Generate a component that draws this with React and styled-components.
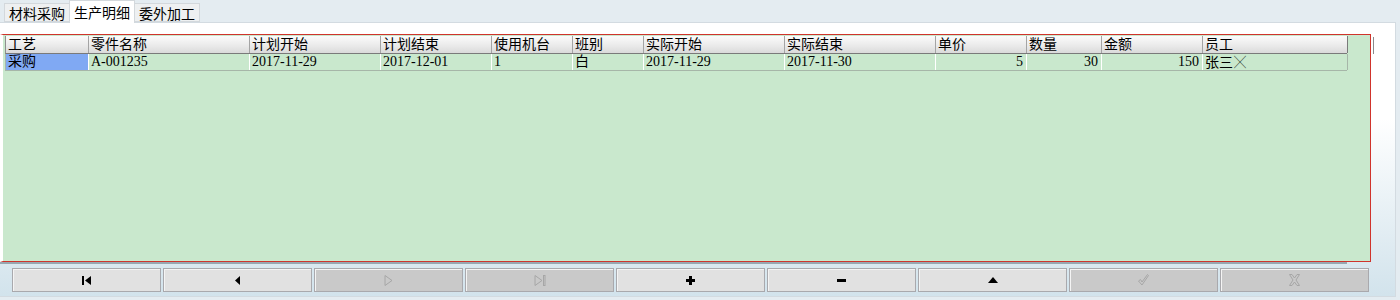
import React from "react";
import styled, { createGlobalStyle } from "styled-components";

const GlobalStyle = createGlobalStyle`
  html, body {
    margin: 0;
    padding: 0;
    background: #e4ecf1;
  }
  body {
    font-family: "Noto Sans CJK SC", sans-serif;
    font-size: 14px;
    color: #000;
  }
`;

const columns = [
  { title: "工艺", width: 83 },
  { title: "零件名称", width: 161 },
  { title: "计划开始", width: 131 },
  { title: "计划结束", width: 111 },
  { title: "使用机台", width: 81 },
  { title: "班别", width: 71 },
  { title: "实际开始", width: 141 },
  { title: "实际结束", width: 151 },
  { title: "单价", width: 91, num: true },
  { title: "数量", width: 75, num: true },
  { title: "金额", width: 101, num: true },
  { title: "员工", width: 145 },
];

const row = [
  "采购",
  "A-001235",
  "2017-11-29",
  "2017-12-01",
  "1",
  "白",
  "2017-11-29",
  "2017-11-30",
  "5",
  "30",
  "150",
  "张三",
];

const template = columns.map((c) => `${c.width}px`).join(" ");

const Page = styled.div`
  width: 1400px;
  height: 300px;
  display: flex;
  flex-direction: column;
  overflow: hidden;
`;

const TabStrip = styled.div`
  height: 22px;
  display: flex;
  align-items: flex-end;
  padding-left: 4px;
  position: relative;
  z-index: 1;
`;

const Tab = styled.div`
  box-sizing: border-box;
  height: ${(p) => (p.$active ? "23px" : "19px")};
  margin-bottom: ${(p) => (p.$active ? "-1px" : "0")};
  padding: 0 4px;
  line-height: ${(p) => (p.$active ? "22px" : "19px")};
  background: ${(p) => (p.$active ? "#ffffff" : "#eef0f1")};
  border: 1px solid #d3d8dc;
  border-bottom: ${(p) => (p.$active ? "none" : "1px solid #d3d8dc")};
  margin-right: -1px;
  white-space: nowrap;
`;

const Panel = styled.div`
  width: 1396px;
  height: 275px;
  box-sizing: border-box;
  border: 1px solid #d3dbe1;
  border-left: none;
  background: linear-gradient(180deg, #ffffff 0%, #ffffff 35%, #d2e3ec 100%);
  padding-top: 11px;
  display: flex;
  flex-direction: column;
`;

const Body = styled.div`
  display: flex;
`;

const GridFrame = styled.div`
  width: 1371px;
  height: 228px;
  box-sizing: border-box;
  border: 1px solid #d0342c;
  border-left: 3px solid #ffffff;
  background: #c9e8cd;
  padding: 1px 0 0 2px;
`;

const Gutter = styled.div`
  flex: 1;
  padding: 3px 0 0 2px;
`;

const Tick = styled.div`
  width: 1px;
  height: 17px;
  background: #8a8a8a;
`;

const GridRow = styled.div`
  display: grid;
  grid-template-columns: ${template};
  width: 1342px;
  height: ${(p) => (p.$header ? "18px" : "17px")};
  box-sizing: border-box;
  border-left: 1px solid ${(p) => (p.$header ? "#8e8e8e" : "#a6b6a8")};
  border-bottom: 1px solid ${(p) => (p.$header ? "#7a7a7a" : "#a6b6a8")};
  background: ${(p) =>
    p.$header ? "linear-gradient(180deg, #fbfbfb 0%, #e9e9e9 60%, #dadada 100%)" : "#c9e8cd"};
`;

const Cell = styled.div`
  box-sizing: border-box;
  border-right: 1px solid ${(p) => (p.$header ? "#a4a4a4" : "#ffffff")};
  padding: 0 ${(p) => (p.$num ? "3px" : "0")} 0 2px;
  text-align: ${(p) => (p.$num ? "right" : "left")};
  line-height: ${(p) => (p.$header ? "17px" : "16px")};
  font-family: "Liberation Serif", "Noto Sans CJK SC", serif;
  white-space: nowrap;
  overflow: hidden;
  background: ${(p) => (p.$selected ? "#80a9f3" : "transparent")};
  &:last-child {
    border-right-color: ${(p) => (p.$header ? "#7a7a7a" : "#a6b6a8")};
  }
`;

const Cross = styled.span`
  font-family: "Noto Sans CJK SC", sans-serif;
  font-size: 12px;
  margin-left: 1px;
`;

const NavArea = styled.div`
  flex: 1;
  display: flex;
  flex-direction: column;
`;

const ShadowLine = styled.div`
  width: 1347px;
  height: 2px;
  background: #97a7b1;
`;

const NavBar = styled.div`
  display: flex;
  gap: 2px;
  padding: 4px 0 0 12px;
`;

const NavButton = styled.div`
  width: 149px;
  height: 24px;
  box-sizing: border-box;
  border: 1px solid #a9a9ad;
  box-shadow: inset 1px 1px 0 #f4f4f4;
  background: ${(p) => (p.$disabled ? "#c9c9c9" : "#e1e1e1")};
  display: flex;
  align-items: center;
  justify-content: center;
`;

const Glyph = ({ children, w = 10, h = 10 }) => (
  <svg width={w} height={h} viewBox={`0 0 ${w} ${h}`}>
    {children}
  </svg>
);

const off = "#a6a6a6";

const buttons = [
  {
    icon: (
      <Glyph w={10} h={9}>
        <rect x="0" y="0" width="2" height="9" fill="#000" />
        <path d="M9 0 L3 4.5 L9 9 Z" fill="#000" />
      </Glyph>
    ),
  },
  {
    icon: (
      <Glyph w={7} h={9}>
        <path d="M6 0 L1 4.5 L6 9 Z" fill="#000" />
      </Glyph>
    ),
  },
  {
    disabled: true,
    icon: (
      <Glyph w={9} h={11}>
        <path d="M1 0.5 L8 5.5 L1 10.5 Z" fill="none" stroke={off} strokeWidth="1" />
      </Glyph>
    ),
  },
  {
    disabled: true,
    icon: (
      <Glyph w={12} h={11}>
        <path d="M1 0.5 L8 5.5 L1 10.5 Z" fill="none" stroke={off} strokeWidth="1" />
        <rect x="9.5" y="0.5" width="1.5" height="10" fill="none" stroke={off} strokeWidth="1" />
      </Glyph>
    ),
  },
  {
    icon: (
      <Glyph w={9} h={9}>
        <rect x="3" y="0" width="3" height="9" fill="#000" />
        <rect x="0" y="3" width="9" height="3" fill="#000" />
      </Glyph>
    ),
  },
  {
    icon: (
      <Glyph w={9} h={3}>
        <rect x="0" y="0" width="9" height="3" fill="#000" />
      </Glyph>
    ),
  },
  {
    icon: (
      <Glyph w={10} h={6}>
        <path d="M5 0 L10 6 L0 6 Z" fill="#000" />
      </Glyph>
    ),
  },
  {
    disabled: true,
    icon: (
      <Glyph w={11} h={12}>
        <path
          d="M0.5 7 L2.5 5.5 L4 8 L9.5 0.5 L10.5 1.5 L4 11 Z"
          fill="none"
          stroke={off}
          strokeWidth="1"
        />
      </Glyph>
    ),
  },
  {
    disabled: true,
    icon: (
      <Glyph w={11} h={12}>
        <path
          d="M0.5 0.5 L3 0.5 L5.5 4 L8 0.5 L10.5 0.5 L7 6 L10.5 11.5 L8 11.5 L5.5 8 L3 11.5 L0.5 11.5 L4 6 Z"
          fill="none"
          stroke={off}
          strokeWidth="1"
        />
      </Glyph>
    ),
  },
];

export default function App() {
  return (
    <Page>
      <GlobalStyle />
      <TabStrip>
        <Tab>材料采购</Tab>
        <Tab $active>生产明细</Tab>
        <Tab>委外加工</Tab>
      </TabStrip>
      <Panel>
        <Body>
          <GridFrame>
            <GridRow $header>
              {columns.map((c) => (
                <Cell key={c.title} $header>
                  {c.title}
                </Cell>
              ))}
            </GridRow>
            <GridRow>
              {row.map((v, i) => (
                <Cell key={i} $num={columns[i].num} $selected={i === 0}>
                  {v}
                  {i === row.length - 1 && <Cross>╳</Cross>}
                </Cell>
              ))}
            </GridRow>
          </GridFrame>
          <Gutter>
            <Tick />
          </Gutter>
        </Body>
        <NavArea>
          <ShadowLine />
          <NavBar>
            {buttons.map((b, i) => (
              <NavButton key={i} $disabled={b.disabled}>
                {b.icon}
              </NavButton>
            ))}
          </NavBar>
        </NavArea>
      </Panel>
    </Page>
  );
}
